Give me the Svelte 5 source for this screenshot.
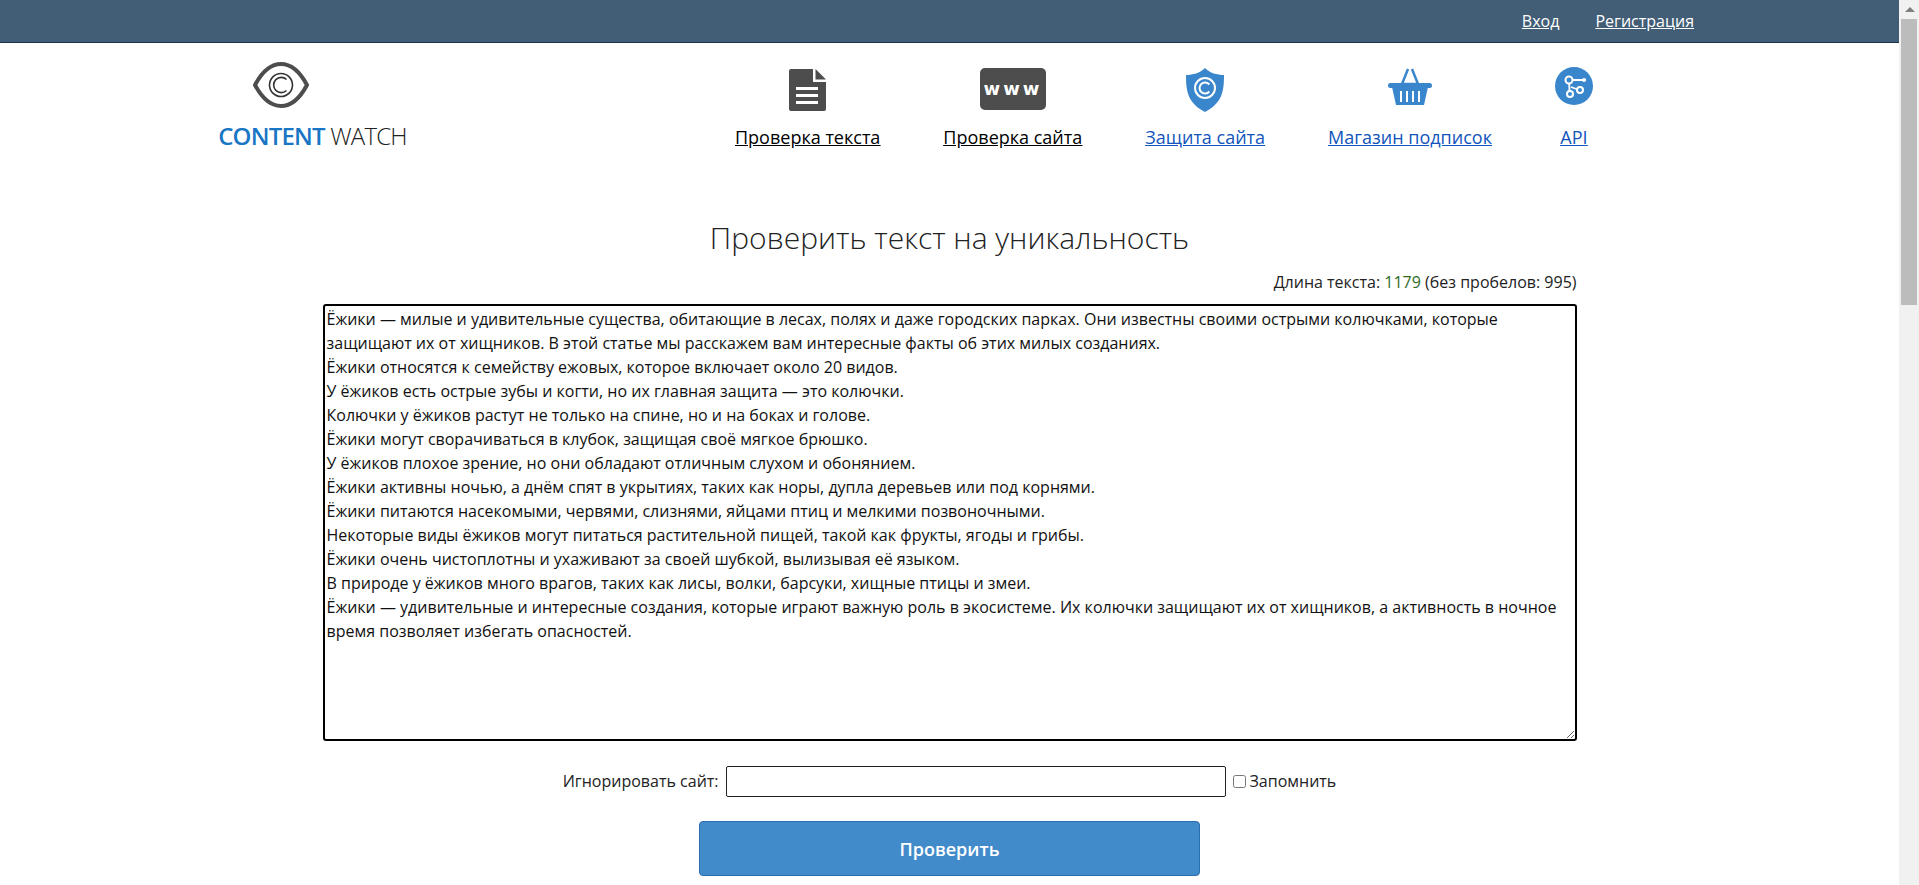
<script>
  import { onMount } from 'svelte';

  const nav = [
    { label: 'Проверка текста', icon: 'doc', dark: true },
    { label: 'Проверка сайта', icon: 'www', dark: true },
    { label: 'Защита сайта', icon: 'shield', dark: false },
    { label: 'Магазин подписок', icon: 'basket', dark: false },
    { label: 'API', icon: 'api', dark: false }
  ];

  const text = `Ёжики — милые и удивительные существа, обитающие в лесах, полях и даже городских парках. Они известны своими острыми колючками, которые защищают их от хищников. В этой статье мы расскажем вам интересные факты об этих милых созданиях.
Ёжики относятся к семейству ежовых, которое включает около 20 видов.
У ёжиков есть острые зубы и когти, но их главная защита — это колючки.
Колючки у ёжиков растут не только на спине, но и на боках и голове.
Ёжики могут сворачиваться в клубок, защищая своё мягкое брюшко.
У ёжиков плохое зрение, но они обладают отличным слухом и обонянием.
Ёжики активны ночью, а днём спят в укрытиях, таких как норы, дупла деревьев или под корнями.
Ёжики питаются насекомыми, червями, слизнями, яйцами птиц и мелкими позвоночными.
Некоторые виды ёжиков могут питаться растительной пищей, такой как фрукты, ягоды и грибы.
Ёжики очень чистоплотны и ухаживают за своей шубкой, вылизывая её языком.
В природе у ёжиков много врагов, таких как лисы, волки, барсуки, хищные птицы и змеи.
Ёжики — удивительные и интересные создания, которые играют важную роль в экосистеме. Их колючки защищают их от хищников, а активность в ночное время позволяет избегать опасностей.`;

  let area;
  onMount(() => {
    area.focus();
    area.setSelectionRange(text.length, text.length);
  });
</script>

<div class="page">
  <div class="topbar">
    <a href="#login">Вход</a>
    <a href="#register">Регистрация</a>
  </div>

  <header class="head">
    <div class="logo">
      <svg width="56" height="48" viewBox="0 0 56 48" aria-hidden="true">
        <path d="M2 24 C10 9 19 3 28 3 C37 3 46 9 54 24 C46 39 37 45 28 45 C19 45 10 39 2 24 Z" fill="none" stroke="#4d4d4d" stroke-width="4" stroke-linejoin="round"/>
        <circle cx="28" cy="24" r="11.5" fill="none" stroke="#333" stroke-width="1.6"/>
        <path d="M33.5 18.5 A7.6 7.6 0 1 0 33.5 29.5" fill="none" stroke="#333" stroke-width="1.6"/>
      </svg>
      <div class="brand"><b>CONTENT</b> WATCH</div>
    </div>

    <nav class="nav">
      {#each nav as item}
        <a class="navitem" class:dark={item.dark} href="#item">
          <span class="icon">
            {#if item.icon === 'doc'}
              <svg width="40" height="46" viewBox="0 0 40 46" aria-hidden="true">
                <path d="M3 2 H25 V15 H38 V42 A2 2 0 0 1 36 44 H3 A2 2 0 0 1 1 42 V4 A2 2 0 0 1 3 2 Z" fill="#4d4d4d"/>
                <path d="M27.500 2 L38 12.500 H27.500 Z" fill="#4d4d4d"/>
                <path d="M8 21.500 H30 M8 28.500 H30 M8 35.500 H30" stroke="#fff" stroke-width="3"/>
              </svg>
            {:else if item.icon === 'www'}
              <svg width="68" height="44" viewBox="0 0 68 44" aria-hidden="true">
                <rect x="1" y="1" width="66" height="42" rx="5" fill="#4d4d4d"/>
                <text x="34" y="28" class="www">www</text>
              </svg>
            {:else if item.icon === 'shield'}
              <svg width="40" height="46" viewBox="0 0 40 46" aria-hidden="true">
                <path d="M20 1 C25 6 32 8 39 8 C39 25 37 36 20 45 C3 36 1 25 1 8 C8 8 15 6 20 1 Z" fill="#3a86cc"/>
                <circle cx="20" cy="21" r="10" fill="none" stroke="#fff" stroke-width="2"/>
                <path d="M24.300 17.500 A5.500 5.500 0 1 0 24.300 24.500" fill="none" stroke="#fff" stroke-width="2"/>
              </svg>
            {:else if item.icon === 'basket'}
              <svg width="46" height="44" viewBox="0 0 46 44" aria-hidden="true">
                <path d="M15 17 L21 2 M31 17 L25 2 M15 17 H31" fill="none" stroke="#3a86cc" stroke-width="2.500"/>
                <rect x="1" y="16" width="44" height="5" rx="2.500" fill="#3a86cc"/>
                <path d="M5 20 H41 L37 38 H9 Z" fill="#3a86cc"/>
                <path d="M14 24 V35 M20 24 V35 M26 24 V35 M32 24 V35" stroke="#fff" stroke-width="2"/>
              </svg>
            {:else}
              <svg width="38" height="38" viewBox="0 0 38 38" aria-hidden="true">
                <circle cx="19" cy="19" r="19" fill="#3a86cc"/>
                <path d="M14 13 L14.500 24 L18 29 M14 13 H31 M16 20 L24 23" fill="none" stroke="#fff" stroke-width="1.800"/>
                <circle cx="14" cy="13" r="3.500" fill="#3a86cc" stroke="#fff" stroke-width="2"/>
                <circle cx="15" cy="27" r="3" fill="#3a86cc" stroke="#fff" stroke-width="2"/>
                <circle cx="25" cy="23" r="3" fill="#3a86cc" stroke="#fff" stroke-width="2"/>
                <circle cx="29" cy="13" r="2" fill="#fff"/>
              </svg>
            {/if}
          </span>
          <span class="label">{item.label}</span>
        </a>
      {/each}
    </nav>
  </header>

  <main class="main">
    <h1>Проверить текст на уникальность</h1>
    <div class="count">Длина текста: <span class="num">1179</span> (без пробелов: 995)</div>
    <textarea bind:this={area} class="text" value={text} spellcheck="false"></textarea>
    <div class="ignore">
      <label for="site">Игнорировать сайт:</label>
      <input id="site" class="site" type="text" />
      <label class="remember"><input type="checkbox" />Запомнить</label>
    </div>
    <button class="check" type="button">Проверить</button>
  </main>
</div>

<div class="scrollbar">
  <span class="arrow"></span>
  <span class="thumb"></span>
</div>

<style>
  :global(html), :global(body) {
    margin: 0;
    height: 885px;
    overflow: hidden;
    background: #fff;
  }
  .page {
    width: 1899px;
    height: 885px;
    overflow: hidden;
    font-family: "Open Sans", sans-serif;
    font-size: 16px;
    color: #222;
  }
  .topbar {
    box-sizing: border-box;
    height: 43px;
    background: #425d76;
    border-bottom: 1px solid #16344f;
    display: flex;
    justify-content: flex-end;
    align-items: center;
    gap: 36px;
    padding: 0 205px 0 0;
  }
  .topbar a { color: #fff; font-size: 16px; }
  .head {
    height: 123px;
    position: relative;
    display: flex;
    padding-left: 205px;
  }
  .logo {
    width: 215px;
    display: flex;
    flex-direction: column;
    align-items: center;
    padding-top: 18px;
  }
  .logo svg { margin-right: 64px; margin-left: 0; }
  .brand {
    font-size: 24px;
    font-weight: 300;
    color: #222;
    white-space: nowrap;
    margin-top: 11px;
    line-height: 32px;
    letter-spacing: -0.8px;
  }
  .brand b { font-weight: 600; color: #1976c5; }
  .nav {
    display: flex;
    gap: 63px;
    margin-left: 315px;
    padding-top: 24px;
  }
  .navitem {
    display: flex;
    flex-direction: column;
    align-items: center;
    color: #1155bb;
    font-size: 18px;
    white-space: nowrap;
  }
  .navitem.dark { color: #000; }
  .icon {
    height: 48px;
    display: flex;
    align-items: flex-start;
    justify-content: center;
  }
  .label { margin-top: 9px; line-height: 26px; text-decoration: underline; }
  .www {
    fill: #fff;
    font-family: "DejaVu Sans", sans-serif;
    font-weight: 700;
    font-size: 18px;
    letter-spacing: 3px;
    text-anchor: middle;
  }
  .main {
    display: flex;
    flex-direction: column;
    align-items: center;
  }
  h1 {
    margin: 50px 0 0;
    font-size: 30px;
    font-weight: 300;
    line-height: 44px;
    color: #222;
  }
  .count {
    width: 1254px;
    text-align: right;
    margin-top: 10px;
    line-height: 24px;
  }
  .num { color: #2e6b1f; }
  .text {
    box-sizing: border-box;
    display: block;
    width: 1254px;
    height: 437px;
    margin: 10px 0 0;
    padding: 1px 2px;
    border: 2px solid #000;
    border-radius: 3px;
    outline: none;
    font: 16px/24px "Open Sans", sans-serif;
    color: #111;
    resize: both;
    overflow: hidden;
  }
  .ignore {
    display: flex;
    align-items: center;
    margin-top: 24px;
    height: 32px;
    gap: 7px;
  }
  .site {
    box-sizing: border-box;
    width: 500px;
    height: 31px;
    border: 1px solid #222;
    border-radius: 2px;
    padding: 1px 2px;
  }
  .remember { display: flex; align-items: center; gap: 4px; }
  .remember input { margin: 0; width: 13px; height: 13px; }
  .check {
    box-sizing: border-box;
    width: 501px;
    height: 55px;
    margin-top: 24px;
    background: #428bca;
    border: 1px solid #2a6eae;
    border-radius: 4px;
    color: #fff;
    font: 600 18px "Open Sans", sans-serif;
  }
  .scrollbar {
    position: fixed;
    top: 0;
    right: 0;
    width: 20px;
    height: 885px;
    background: #f1f1f1;
  }
  .arrow {
    position: absolute;
    left: 6px;
    top: 7px;
    border: 5px solid transparent;
    border-top: 0;
    border-bottom: 5px solid #7f7f7f;
  }
  .thumb {
    position: absolute;
    left: 2px;
    right: 2px;
    top: 19px;
    height: 286px;
    background: #bcbcbc;
  }
</style>
